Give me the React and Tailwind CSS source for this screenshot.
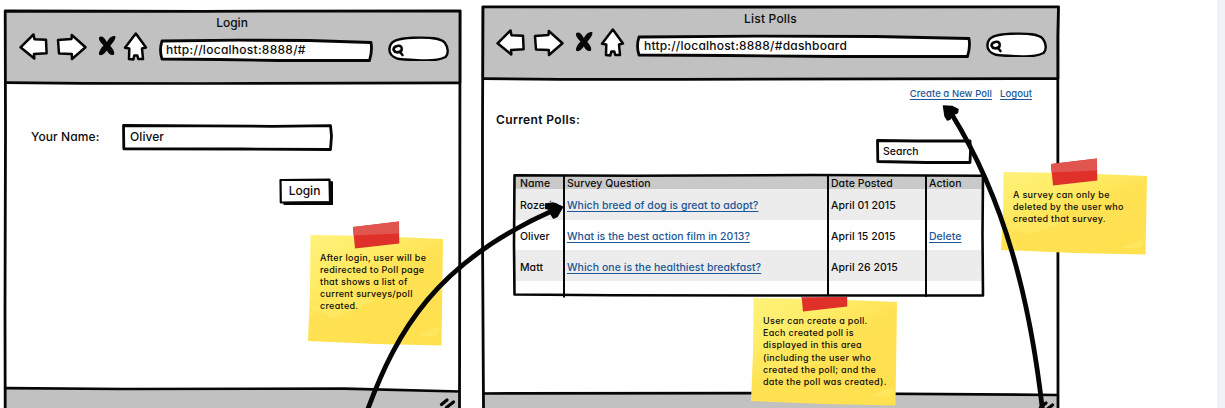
import React from "react";

const INK = "#060606";

/* A box whose outline is a hand-drawn path, stretched behind its content. */
function SketchBox({ w, h, d, stroke = 2.8, fill = "#fff", className = "", children }) {
  return (
    <div className={"relative shrink-0 " + className}>
      <svg
        className="absolute inset-0 h-full w-full overflow-visible"
        viewBox={`0 0 ${w} ${h}`}
        preserveAspectRatio="none"
        aria-hidden="true"
      >
        <path d={d} fill={fill} stroke={INK} strokeWidth={stroke} strokeLinejoin="round" />
      </svg>
      <div className="relative flex h-full w-full items-center">{children}</div>
    </div>
  );
}

function NavIcons() {
  return (
    <svg
      className="h-[34px] w-[136px] shrink-0"
      viewBox="0 0 136 34"
      fill="#fff"
      stroke={INK}
      strokeWidth="2.5"
      strokeLinejoin="round"
      strokeLinecap="round"
      aria-hidden="true"
    >
      <path d="M4.500 17.300 L17.500 4.500 L18.500 9.300 L30 9.800 L30.600 23.300 L18 24 L18.300 28.500 Z" />
      <path d="M42 10 L55.500 9 L55.800 5 L69.500 17.300 L56 29 L55.800 24 L43 23.500 Z" />
      <g stroke="none" fill={INK}>
        <path d="M83 7.500 C85 5 88.500 7 90.800 12 C93.500 7 97 5 99.500 6.500 C99.500 10 96.500 13 94.300 16 C97 19 99 22 98 24.500 C95.500 26 92.500 24 90.800 20.500 C88.500 24 85.500 26.500 83 24.500 C82.500 22 85 18 87.500 15.500 C85 13 82.500 10 83 7.500 Z" />
      </g>
      <path d="M119.800 3.500 L130 17.500 L126 18.500 L127 29 L122.300 29 L121.300 25.500 L118.300 25.500 L117.300 29.500 L113 29 L113.300 18.500 L109 17.800 Z" />
    </svg>
  );
}

function SearchPill() {
  return (
    <svg className="h-[26px] w-[62px] shrink-0" viewBox="0 0 62 26" aria-hidden="true">
      <g fill="#fff" stroke={INK} strokeWidth="2.4" strokeLinecap="round" strokeLinejoin="round">
        <path d="M1.500 14 C1.500 6 9 3.500 25 2.800 C42 2.200 53 3 57 8 C60 12 61 19 57.500 22 C51 25.300 45 25.600 36 25.400 C26 25 16 25 10 23.800 C4 22 1 18 1.500 14 Z" />
        <path d="M9 11 C13 10 14.500 12.500 13.500 15.500 C10.500 18.500 6.500 17.500 5.500 14.800 C5.500 13 6.500 11.500 9 11 Z M12 17 L14.500 20" fill="none" strokeWidth="2.600" />
      </g>
    </svg>
  );
}

function TitleBar({ title, children }) {
  return (
    <header className="flex h-[73px] shrink-0 flex-col bg-[#c1c1c1]">
      <div className="flex h-[21px] items-end justify-center text-[12px] leading-[16px]">{title}</div>
      <div className="-mt-px flex h-[34px] items-center pl-[12px]">
        <NavIcons />
        {children}
        <div className="ml-[14px] pt-[2px]">
          <SearchPill />
        </div>
      </div>
    </header>
  );
}

function Frame({ w, d, lines, footer }) {
  return (
    <svg
      className="pointer-events-none absolute left-0 top-0 h-[402px] w-full overflow-visible"
      viewBox={`0 0 ${w} 402`}
      fill="none"
      stroke={INK}
      strokeLinejoin="round"
      aria-hidden="true"
    >
      <path d={footer} fill="#c1c1c1" stroke="none" />
      <path d={d} strokeWidth="2.800" />
      <path d={lines} strokeWidth="2.700" />
    </svg>
  );
}

function Grip({ className }) {
  return (
    <svg className={"absolute bottom-0 h-[10px] w-[18px] " + className} viewBox="0 0 18 10" fill="none" stroke={INK} strokeWidth="3.200" strokeLinecap="round" aria-hidden="true">
      <path d="M2.500 6.500 L8 2 M7.500 9.500 L14.500 4" />
    </svg>
  );
}

function LoginWindow() {
  return (
    <section className="relative ml-[4px] mt-[10px] flex h-[398px] w-[458px] shrink-0 flex-col bg-white">
      <TitleBar title={<span className="-ml-[2px]">Login</span>}>
        <SketchBox w={214} h={23} className="ml-[7px] mr-px mt-[6px] h-[23px] w-[214px]" d="M3 2 L80 1.200 L150 1.500 L212 3.500 Q213.500 12 210.500 21.500 L120 21.500 L60 20.500 L3 20 Q0 11 3 2 Z">
          <span className="pl-[7px] text-[12px] tracking-[0.270px]">http://localhost:8888/#</span>
        </SketchBox>
      </TitleBar>
      <main className="flex flex-1 flex-col">
        <div className="mt-[41px] flex items-center pl-[27px]">
          <label className="-mt-[2px] w-[91px] text-[12px] leading-[16px] tracking-[0.100px]">Your Name:</label>
          <SketchBox w={211} h={27} className="h-[27px] w-[211px]" d="M1.500 1.500 L80 1.800 L150 2.300 L208.500 1.600 L209.500 12 L208.500 25.500 L120 25 L1.800 24.800 Z">
            <span className="-mt-px pl-[8px] text-[12px] tracking-[0.080px]">Oliver</span>
          </SketchBox>
        </div>
        <div className="mt-[27px] flex pl-[275px]">
          <SketchBox w={54} h={27} className="h-[27px] w-[54px]" stroke={2.2} d="M1.500 2 L50.500 1.700 L51 24 L1.800 24.500 Z">
            <svg className="absolute left-0 top-0 h-[27px] w-[54px]" viewBox="0 0 54 27" aria-hidden="true">
              <path d="M51 3 L54 3.500 L54 27 L4.500 27 L4.500 24 L51 23.500 Z" fill={INK} />
            </svg>
            <span className="-mt-px w-[51px] text-center text-[12px]">Login</span>
          </SketchBox>
        </div>
      </main>
      <Frame
        w={458}
        footer="M1 378 L120 378.600 L340 378.600 L456 381.500 L456 402 L1 402 Z"
        d="M1.200 402 L1 300 L1.500 120 L1.200 1 L200 1.300 L456 0.800 L455.800 200 L455.500 402"
        lines="M2 72.600 L80 73.300 L200 73.500 L456 72.800 M2 378.200 L120 379 L340 378.600 L456 381.500"
      />
      <Grip className="right-[5px]" />
    </section>
  );
}

const polls = [
  { name: "Rozerin", question: "Which breed of dog is great to adopt?", date: "April 01 2015" },
  { name: "Oliver", question: "What is the best action film in 2013?", date: "April 15 2015", action: "Delete" },
  { name: "Matt", question: "Which one is the healthiest breakfast?", date: "April 26 2015" },
];

const COLS = "grid grid-cols-[50px_264px_98px_56px] [&>*]:pl-[2px]";
const LINK = "text-[#1c5796] underline underline-offset-[2px] decoration-1 [text-decoration-skip-ink:none]";

function PollTable() {
  return (
    <div className="relative z-10 ml-[32px] mt-[10px] flex h-[123px] w-[472px] flex-col bg-white pl-[2px] pt-[2px] text-[10.500px] leading-[14px] tracking-[0.040px]">
      <div className={COLS + " h-[13px] w-[468px] items-center bg-[#c9c9c9] pt-px"}>
        <span className="ml-[3px]">Name</span>
        <span>Survey Question</span>
        <span>Date Posted</span>
        <span>Action</span>
      </div>
      {polls.map((p, i) => (
        <div key={p.name} className={COLS + " h-[30.700px] w-[468px] items-center pt-[4px] " + (i % 2 ? "bg-white" : "bg-[#ececec]")}>
          <span className="ml-[3px]">{p.name}</span>
          <span><a className={LINK}>{p.question}</a></span>
          <span>{p.date}</span>
          <span>{p.action && <a className={LINK}>{p.action}</a>}</span>
        </div>
      ))}
      <svg className="absolute left-0 top-0 h-[123px] w-[472px] overflow-visible" viewBox="0 0 472 123" fill="none" stroke={INK} strokeLinejoin="round" aria-hidden="true">
        <path d="M1.500 1.200 L120 1.700 L300 1 L470 1.800 L469.500 60 L470 121.500 L330 121.500 L100 121.300 L1.500 120.500 L1 70 Z" strokeWidth="2.600" />
        <path d="M51 2 L51 123.500 M315 2 L315 122 M413 2 L413 123" strokeWidth="2" />
      </svg>
    </div>
  );
}

function PollsWindow() {
  return (
    <section className="relative ml-[19px] mt-[6px] flex h-[402px] w-[579px] shrink-0 flex-col bg-white">
      <TitleBar title={<span className="tracking-[0.200px]">List Polls</span>}>
        <SketchBox w={335} h={23} className="ml-[7px] mr-px mt-[6px] h-[23px] w-[335px]" d="M3 2 L120 1.200 L240 1.500 L333 3.500 Q334.500 12 331.500 21.500 L200 21.500 L90 20.500 L3 20 Q0 11 3 2 Z">
          <span className="pl-[8px] text-[12px] tracking-[0.220px]">http://localhost:8888/#dashboard</span>
        </SketchBox>
      </TitleBar>
      <main className="flex flex-1 flex-col">
        <nav className="mt-[8px] flex h-[13px] items-center justify-end gap-[8px] pr-[28px] text-[9.500px] leading-[13px] tracking-[0.060px]">
          <a className={LINK}>Create a New Poll</a>
          <a className={LINK}>Logout</a>
        </nav>
        <h1 className="mt-[11px] pl-[15px] text-[12px] font-semibold leading-[18px] tracking-[0.380px]">Current Polls:</h1>
        <SketchBox w={96} h={25} className="ml-[395px] mt-[10px] h-[25px] w-[96px]" d="M1.500 1.500 L40 2 L94 1.800 L94.500 12 L94 23.500 L50 23.500 L1.800 22.500 Z">
          <span className="pl-[7px] text-[10.500px]">Search</span>
        </SketchBox>
        <PollTable />
      </main>
      <Frame
        w={579}
        footer="M2 387.500 L300 387 L577 389 L577 402 L2 402 Z"
        d="M2.500 402 L1.500 230 L1.500 120 L2 0.800 L300 1 L577.500 0.800 L576.800 30 L577 402"
        lines="M2 72.600 L80 73.300 L200 73.300 L577 72.600 M2 387.500 L300 387 L577 389"
      />
      <Grip className="right-[4px] -mb-[3px]" />
    </section>
  );
}

function StickyNote({ id, w, h, className, tapeX, children }) {
  return (
    <aside className={"absolute text-[9px] leading-[12.200px] tracking-[0.310px] " + className}>
      <svg className="absolute inset-0 h-full w-full overflow-visible" viewBox={`0 0 ${w} ${h}`} aria-hidden="true">
        <defs>
          <linearGradient id={id} x1="0" y1="0" x2="0.700" y2="1">
            <stop offset="0" stopColor="#fff27a" />
            <stop offset="0.300" stopColor="#ffed68" />
            <stop offset="0.550" stopColor="#ffe253" />
            <stop offset="1" stopColor="#ffe04f" />
          </linearGradient>
        </defs>
        <path d={`M2.500 0 L${w * 0.5} 1 L${w} 4 L${w - 1.5} ${h - 0.5} L${w * 0.5} ${h - 2} L0 ${h - 5} L2 ${h * 0.5} Z`} fill={`url(#${id})`} />
        <path d={`M3 ${h * 0.65} L${w * 0.32} ${h * 0.53} L${w * 0.5} ${h * 0.59} L${w * 0.18} ${h * 0.75} Z`} fill="#fff17a" opacity="0.300" />
        <path d={`M${w * 0.8} ${h * 0.92} L${w * 0.93} ${h * 0.84} L${w - 2} ${h * 0.83} L${w - 7} ${h * 0.91} Z`} fill="#fff17a" opacity="0.350" />
        <g transform={`translate(${tapeX} -13.500)`}>
          <path d="M0 5.500 L46 0 L46.300 22 L2 27 Z" fill="#df3029" />
          <path d="M0 5.500 L46 0 L46 12 L0.500 14 Z" fill="#e0554d" />
        </g>
      </svg>
      <p className="relative whitespace-pre">{children}</p>
    </aside>
  );
}

function Arrows() {
  return (
    <svg className="pointer-events-none absolute inset-0 z-20 h-[408px] w-[1225px]" viewBox="0 0 1225 408" fill="none" stroke={INK} strokeWidth="4.800" aria-hidden="true">
      <path d="M367.500 410 C397 330 437 262 552 211" />
      <path d="M1042.500 410 C1030 300 1005 200 951 113" />
      <g fill={INK} strokeWidth="1.500" strokeLinejoin="round">
        <path d="M562.500 207 L553 203 L547 204 L545.500 208 L552 210 L551 214 L553.500 218 L557 216.500 Z" />
        <path d="M546 203.800 L551 204 L550 208.500 L546 208.500 Z" />
        <path d="M943.500 106 L952 106.500 L958 109.500 L957.500 112.500 L952.500 115 L950 119 L947.500 120 L945 116 Z" />
      </g>
    </svg>
  );
}

export default function App() {
  return (
    <div className="relative flex h-[408px] w-[1225px] overflow-hidden bg-white font-['Inter','Liberation_Sans',sans-serif] font-medium text-[#0c0c0c] [font-feature-settings:'cv11']">
      <LoginWindow />
      <PollsWindow />
      <div className="ml-auto w-[8px] shrink-0 bg-[#eff3f9]" />

      <StickyNote id="note-login" w={135} h={111} tapeX={45} className="left-[308px] top-[235px] h-[111px] w-[135px] pl-[12px] pt-[16.500px]">
        {"After login, user will be\nredirected to Poll page\nthat shows a list of\ncurrent surveys/poll\ncreated."}
      </StickyNote>
      <StickyNote id="note-create" w={146} h={108} tapeX={50} className="left-[751px] top-[298px] h-[108px] w-[146px] pl-[12px] pt-[17px]">
        {"User can create a poll.\nEach created poll is\ndisplayed in this area\n(including the user who\ncreated the poll; and the\ndate the poll was created)."}
      </StickyNote>
      <StickyNote id="note-delete" w={146} h={83} tapeX={50} className="left-[1001px] top-[172px] h-[83px] w-[146px] pl-[12px] pt-[16.500px]">
        {"A survey can only be\ndeleted by the user who\ncreated that survey."}
      </StickyNote>

      <Arrows />
    </div>
  );
}
